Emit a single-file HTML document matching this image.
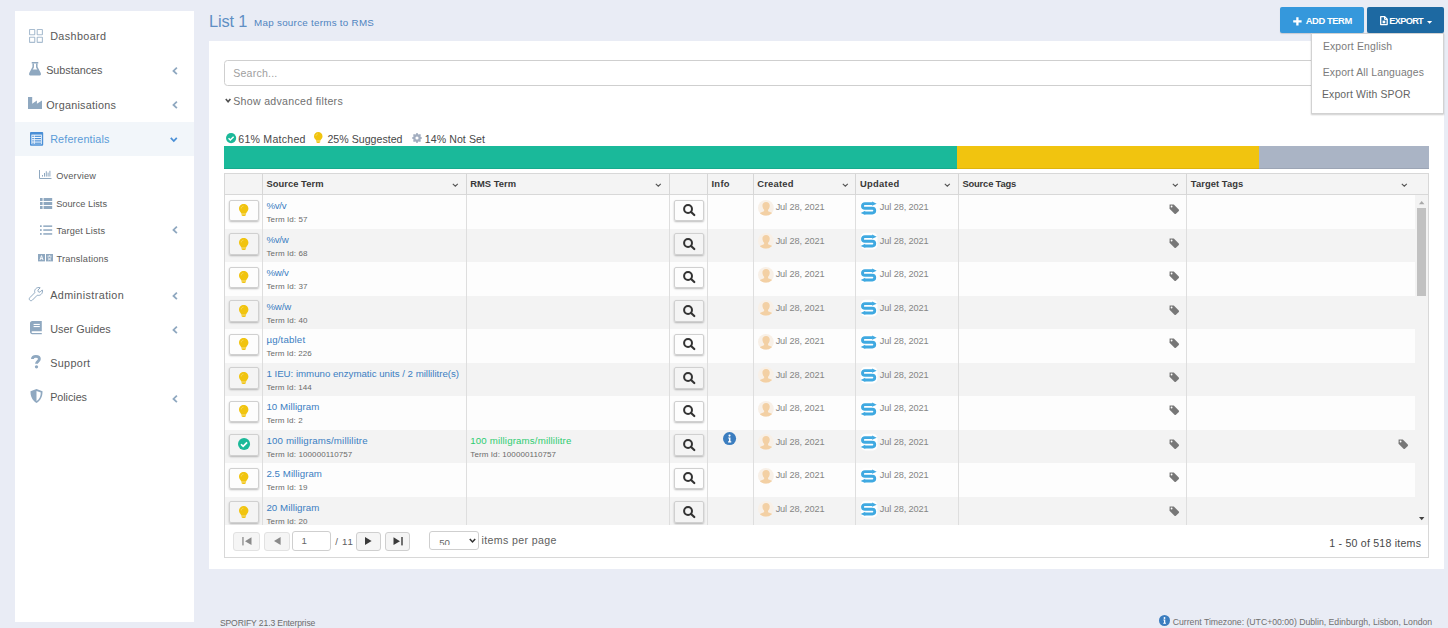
<!DOCTYPE html>
<html lang="en">
<head>
<meta charset="utf-8">
<title>List 1 - Map source terms to RMS</title>
<style>
*{box-sizing:border-box;margin:0;padding:0}
html,body{width:1448px;height:628px;overflow:hidden}
body{background:#e9ecf5;font-family:"Liberation Sans", sans-serif;position:relative}
.abs{position:absolute}
svg{display:block;overflow:visible}
.tx{position:absolute;white-space:nowrap}
#side{position:absolute;left:15.2px;top:11px;width:178.6px;height:611px;background:#fff}
#panel{position:absolute;left:209px;top:40.8px;width:1235px;height:528px;background:#fff}
#bar{position:absolute;left:224px;top:146.3px;width:1204.6px;height:22.8px;background:#aab4c5;overflow:hidden}
#bar .g{position:absolute;left:0;top:0;height:23px;width:733px;background:#1ab99a}
#bar .y{position:absolute;left:733px;top:0;height:23px;width:302.3px;background:#f1c40f}
#bar .sh{position:absolute;left:0;bottom:0;height:1px;width:100%;background:rgba(0,0,0,.08)}
#dd{position:absolute;left:1311.2px;top:33.2px;width:132.8px;height:80.6px;background:#fff;border:1px solid #d2d2d2;box-shadow:0 1px 1.5px rgba(0,0,0,.2)}
#grid{position:absolute;left:223.6px;top:173px;width:1205.4px;height:384.7px;border:1px solid #d8d8d8;background:#fff}
#ghead{position:absolute;left:224.6px;top:174px;width:1203.4px;height:20.8px;background:#f4f4f4;border-bottom:1px solid #d8d8d8}
#gbody{position:absolute;left:224.6px;top:194.8px;width:1190.4px;height:330.1px;overflow:hidden}
.row{position:absolute;left:0;width:1191px;background:#fdfdfd}
.row.alt{background:#f3f3f3}
.ib{position:absolute;width:30px;height:21.2px;border:1px solid #d0d0d0;border-radius:2px;background:rgba(255,255,255,.12);box-shadow:0 1px 2px rgba(0,0,0,.26)}
</style>
</head>
<body>
<div id="side"></div>
<div class="abs" style="left:15px;top:122.1px;width:179px;height:34px;background:#f2f6fa"></div>
<svg class="abs" style="left:29px;top:28.7px" width="14" height="14" viewBox="0 0 14 14" ><rect x="0.55" y="0.55" width="5.2" height="5.2" rx="0.4" fill="none" stroke="#a9bdd0" stroke-width="1.1"/><rect x="0.55" y="8.2" width="5.2" height="5.2" rx="0.4" fill="none" stroke="#a9bdd0" stroke-width="1.1"/><rect x="8.2" y="0.55" width="5.2" height="5.2" rx="0.4" fill="none" stroke="#a9bdd0" stroke-width="1.1"/><rect x="8.2" y="8.2" width="5.2" height="5.2" rx="0.4" fill="none" stroke="#a9bdd0" stroke-width="1.1"/></svg>
<span id="t0" class="tx" style="left:50.15px;top:29.13px;font-size:10.8px;line-height:14.0px;color:#585858;letter-spacing:0.391px;">Dashboard</span>
<svg class="abs" style="left:29.3px;top:62.3px" width="12" height="13.5" viewBox="0 0 12 13.5" ><rect x="2.700" y="0" width="6.600" height="1.500" rx="0.300" fill="#8fa8c0"/><path d="M4.200 1.400v3.800L0.900 11.300c-.4.700.100 1.500.900 1.500h8.400c.8 0 1.300-.8.900-1.500L7.800 5.200V1.400" fill="none" stroke="#8fa8c0" stroke-width="1.500" stroke-linejoin="round"/><path d="M3 7.400h6l2.400 4.300c.3.500-.100 1.100-.700 1.100H1.300c-.600 0-1-.600-.700-1.100z" fill="#8fa8c0"/></svg>
<span id="t1" class="tx" style="left:46.20px;top:63.43px;font-size:10.8px;line-height:14.0px;color:#585858;letter-spacing:-0.020px;">Substances</span>
<svg class="abs" style="left:171.7px;top:67.2px" width="5.8" height="7.8" viewBox="0 0 5.8 7.8" ><path d="M4.900 0.700L1.500 3.900l3.400 3.200" fill="none" stroke="#8fa8c0" stroke-width="1.800"/></svg>
<svg class="abs" style="left:28.2px;top:97.2px" width="14" height="12.1" viewBox="0 0 14 12.1" ><path d="M0 0h4.200v6.800l4.700-3.300v3.300l5.100-3.300v8.600H0z" fill="#8fa8c0"/></svg>
<span id="t2" class="tx" style="left:46.20px;top:97.63px;font-size:10.8px;line-height:14.0px;color:#585858;letter-spacing:0.248px;">Organisations</span>
<svg class="abs" style="left:171.7px;top:101.4px" width="5.8" height="7.8" viewBox="0 0 5.8 7.8" ><path d="M4.900 0.700L1.500 3.900l3.400 3.200" fill="none" stroke="#8fa8c0" stroke-width="1.800"/></svg>
<svg class="abs" style="left:29.9px;top:132px" width="13.2" height="13.7" viewBox="0 0 13.2 13.7" ><rect x="0.700" y="0.700" width="11.800" height="12.300" rx="0.300" fill="#f4f8fd" stroke="#4a8fd6" stroke-width="1.400"/><rect x="0.700" y="0.700" width="11.800" height="1.900" fill="#4a8fd6"/><rect x="2.300" y="3.7" width="1.500" height="1.200" fill="#4a8fd6"/><rect x="4.700" y="3.7" width="6.300" height="1.200" fill="#4a8fd6"/><rect x="2.300" y="6.0" width="1.500" height="1.200" fill="#4a8fd6"/><rect x="4.700" y="6.0" width="6.300" height="1.200" fill="#4a8fd6"/><rect x="2.300" y="8.3" width="1.500" height="1.200" fill="#4a8fd6"/><rect x="4.700" y="8.3" width="6.300" height="1.200" fill="#4a8fd6"/><rect x="2.300" y="10.6" width="1.500" height="1.200" fill="#4a8fd6"/><rect x="4.700" y="10.6" width="6.300" height="1.200" fill="#4a8fd6"/></svg>
<span id="t3" class="tx" style="left:50.15px;top:131.53px;font-size:10.8px;line-height:14.0px;color:#5a9bd8;letter-spacing:0.149px;">Referentials</span>
<svg class="abs" style="left:170.4px;top:137px" width="7.6" height="5.2" viewBox="0 0 7.6 5.2" ><path d="M0.800 0.900L3.8 4.1L6.8 0.900" fill="none" stroke="#4a8fd6" stroke-width="1.7"/></svg>
<svg class="abs" style="left:39.3px;top:170.2px" width="12.5" height="9.2" viewBox="0 0 12.5 9.2" ><path d="M0.500 0v8.500h12" fill="none" stroke="#8fa8c0" stroke-width="1"/><rect x="3.0" y="5.0" width="1" height="1.6" fill="#8fa8c0"/><rect x="5.0" y="2.9999999999999996" width="1" height="3.6" fill="#8fa8c0"/><rect x="6.8" y="1.1999999999999993" width="1" height="5.4" fill="#8fa8c0"/><rect x="8.6" y="2.5999999999999996" width="1" height="4.0" fill="#8fa8c0"/><rect x="10.4" y="0.7999999999999998" width="1" height="5.8" fill="#8fa8c0"/></svg>
<span id="t4" class="tx" style="left:56.15px;top:170.01px;font-size:9.2px;line-height:12.0px;color:#585858;letter-spacing:0.211px;">Overview</span>
<svg class="abs" style="left:39.6px;top:197.5px" width="12.2" height="11.2" viewBox="0 0 12.2 11.2" ><rect x="0" y="0" width="2.600" height="3" fill="#8fa8c0"/><rect x="3.600" y="0" width="8.600" height="3" fill="#8fa8c0"/><rect x="0" y="4" width="2.600" height="3" fill="#8fa8c0"/><rect x="3.600" y="4" width="8.600" height="3" fill="#8fa8c0"/><rect x="0" y="8" width="2.600" height="3" fill="#8fa8c0"/><rect x="3.600" y="8" width="8.600" height="3" fill="#8fa8c0"/></svg>
<span id="t5" class="tx" style="left:56.15px;top:198.11px;font-size:9.2px;line-height:12.0px;color:#585858;letter-spacing:0.027px;">Source Lists</span>
<svg class="abs" style="left:39.6px;top:225.2px" width="12.2" height="10" viewBox="0 0 12.2 10" ><rect x="0" y="0.3" width="1.700" height="1.700" fill="#8fa8c0"/><rect x="3.300" y="0.4" width="8.900" height="1.500" fill="#8fa8c0"/><rect x="0" y="4.2" width="1.700" height="1.700" fill="#8fa8c0"/><rect x="3.300" y="4.3" width="8.900" height="1.500" fill="#8fa8c0"/><rect x="0" y="8.1" width="1.700" height="1.700" fill="#8fa8c0"/><rect x="3.300" y="8.2" width="8.900" height="1.500" fill="#8fa8c0"/></svg>
<span id="t6" class="tx" style="left:56.45px;top:225.31px;font-size:9.2px;line-height:12.0px;color:#585858;letter-spacing:0.147px;">Target Lists</span>
<svg class="abs" style="left:172px;top:226.4px" width="5.8" height="7.8" viewBox="0 0 5.8 7.8" ><path d="M4.900 0.700L1.500 3.900l3.400 3.200" fill="none" stroke="#8fa8c0" stroke-width="1.800"/></svg>
<svg class="abs" style="left:38px;top:253.8px" width="15" height="7.4" viewBox="0 0 15 7.4" ><rect x="0" y="0" width="7" height="7.400" fill="#8fa8c0"/><rect x="8" y="0" width="7" height="7.400" fill="#8fa8c0"/><path d="M2 6l1.500-4.400 1.500 4.400M2.600 4.600h1.800" stroke="#fff" stroke-width="0.9" fill="none"/><path d="M9.500 2.200h4M11.500 1.200v1M10.200 3.400c.5 1.400 1.500 2.200 2.800 2.600M12.800 3.400c-.5 1.400-1.500 2.200-2.800 2.600" stroke="#fff" stroke-width="0.8" fill="none"/></svg>
<span id="t7" class="tx" style="left:56.45px;top:252.61px;font-size:9.2px;line-height:12.0px;color:#585858;letter-spacing:0.204px;">Translations</span>
<svg class="abs" style="left:29px;top:286.8px" width="14.4" height="14.4" viewBox="0 0 14.4 14.4" ><path d="M13.300 2.900l-2.300 2.300-1.700-.4-.4-1.700 2.300-2.300c-1.600-.6-3.400-.2-4.500 1-1 1.100-1.300 2.500-.9 3.900l-5 5c-.7.700-.7 1.800 0 2.500s1.800.7 2.500 0l5-5c1.400.4 2.800.1 3.900-.9 1.200-1.100 1.600-2.900 1.100-4.400z" fill="none" stroke="#8fa8c0" stroke-width="1" stroke-linejoin="round"/></svg>
<span id="t8" class="tx" style="left:50.15px;top:287.73px;font-size:10.8px;line-height:14.0px;color:#585858;letter-spacing:0.400px;">Administration</span>
<svg class="abs" style="left:171.7px;top:292px" width="5.8" height="7.8" viewBox="0 0 5.8 7.8" ><path d="M4.900 0.700L1.500 3.900l3.400 3.200" fill="none" stroke="#8fa8c0" stroke-width="1.800"/></svg>
<svg class="abs" style="left:30.2px;top:320.7px" width="11.9" height="13.3" viewBox="0 0 11.9 13.3" ><path d="M2.200 0h9.600v10.200h-9.400c-.5 0-.9.400-.9.900s.4.900.9.900h9.400v1.300H2.200C1 13.300 0 12.300 0 11.100V2.200C0 1 1 0 2.200 0z" fill="#8fa8c0"/><rect x="3.600" y="2.900" width="6.200" height="1.100" fill="#fff"/><rect x="3.600" y="5" width="6.200" height="1.100" fill="#fff"/></svg>
<span id="t9" class="tx" style="left:50.15px;top:322.03px;font-size:10.8px;line-height:14.0px;color:#585858;letter-spacing:0.058px;">User Guides</span>
<svg class="abs" style="left:171.7px;top:326.2px" width="5.8" height="7.8" viewBox="0 0 5.8 7.8" ><path d="M4.900 0.700L1.500 3.900l3.400 3.200" fill="none" stroke="#8fa8c0" stroke-width="1.800"/></svg>
<svg class="abs" style="left:31.2px;top:355.2px" width="10" height="13.5" viewBox="0 0 10 13.5" ><path d="M1.400 4C1.500 2.200 2.900 1.400 4.900 1.400c2.100 0 3.500.9 3.500 2.600 0 2.300-2.900 2.400-2.900 4.700" fill="none" stroke="#8fa8c0" stroke-width="2.800"/><circle cx="5.500" cy="11.800" r="1.650" fill="#8fa8c0"/></svg>
<span id="t10" class="tx" style="left:50.15px;top:356.13px;font-size:10.8px;line-height:14.0px;color:#585858;letter-spacing:0.357px;">Support</span>
<svg class="abs" style="left:29.7px;top:388.8px" width="13" height="14" viewBox="0 0 13 14" ><path d="M6.500 0l6 2.200c.1 5.200-1.700 9.200-6 11.800C2.200 11.400.400 7.400.500 2.200z" fill="#8fa8c0"/><path d="M6.500 1.900l4.300 1.600c0 3.700-1.300 6.600-4.300 8.700z" fill="#fff"/></svg>
<span id="t11" class="tx" style="left:50.15px;top:390.13px;font-size:10.8px;line-height:14.0px;color:#585858;letter-spacing:-0.051px;">Policies</span>
<svg class="abs" style="left:171.7px;top:394.6px" width="5.8" height="7.8" viewBox="0 0 5.8 7.8" ><path d="M4.900 0.700L1.500 3.900l3.400 3.200" fill="none" stroke="#8fa8c0" stroke-width="1.800"/></svg>
<span id="t12" class="tx" style="left:208.92px;top:11.45px;font-size:16.4px;line-height:21.3px;color:#5f8fc4;letter-spacing:-0.124px;">List 1</span>
<span id="t13" class="tx" style="left:254.11px;top:17.17px;font-size:9.8px;line-height:12.7px;color:#4f84c0;letter-spacing:0.273px;">Map source terms to RMS</span>
<div class="abs" style="left:1279.8px;top:7.4px;width:84.2px;height:25.5px;background:#3598dc;border-radius:2px;box-shadow:0 1px 1px rgba(0,0,0,.15)"></div>
<svg class="abs" style="left:1293.4px;top:16.5px" width="8.8" height="8.8" viewBox="0 0 8.8 8.8" ><path d="M4.400 0.200v8.400M0.200 4.400h8.400" stroke="#fff" stroke-width="2.300"/></svg>
<span id="t14" class="tx" style="left:1305.74px;top:14.61px;font-size:9.4px;line-height:12.2px;color:#fff;font-weight:bold;letter-spacing:-0.420px;">ADD TERM</span>
<div class="abs" style="left:1366.5px;top:7.4px;width:77.4px;height:25.5px;background:#1d69a2;border-radius:2px;box-shadow:0 1px 1px rgba(0,0,0,.15)"></div>
<svg class="abs" style="left:1380px;top:16px" width="7.9" height="9.3" viewBox="0 0 7.9 9.3" ><path d="M0.700 0.700h4l2.500 2.500v5.400H0.700z" fill="none" stroke="#fff" stroke-width="1.300" stroke-linejoin="round"/><path d="M4.500 0.700v2.700h2.700" fill="none" stroke="#fff" stroke-width="1"/><rect x="2.600" y="4.600" width="2.700" height="2.700" fill="#fff"/></svg>
<span id="t15" class="tx" style="left:1389.35px;top:14.71px;font-size:9.2px;line-height:12.0px;color:#fff;font-weight:bold;letter-spacing:-0.683px;">EXPORT</span>
<svg class="abs" style="left:1427.2px;top:21.2px" width="5.2" height="2.8" viewBox="0 0 5.2 2.8" ><path d="M0 0h5.2L2.6 2.8z" fill="#fff"/></svg>
<div id="panel"></div>
<div class="abs" style="left:224.2px;top:60px;width:1204.6px;height:25.5px;border:1px solid #cfcfcf;border-radius:3.5px;background:#fff"></div>
<span id="t16" class="tx" style="left:233.26px;top:66.63px;font-size:10.6px;line-height:13.8px;color:#a0a0a0;letter-spacing:0.196px;">Search...</span>
<svg class="abs" style="left:224.6px;top:98.2px" width="6.2" height="4.8" viewBox="0 0 6.2 4.8" ><path d="M0.800 0.900L3.1 3.6999999999999997L5.4 0.900" fill="none" stroke="#505050" stroke-width="1.6"/></svg>
<span id="t17" class="tx" style="left:233.26px;top:94.93px;font-size:10.6px;line-height:13.8px;color:#707070;letter-spacing:0.290px;">Show advanced filters</span>
<svg class="abs" style="left:225.9px;top:132.8px" width="10.2" height="10.2" viewBox="0 0 12 12" ><circle cx="6" cy="6" r="6" fill="#1cb999"/><path d="M3 6.200l2.100 2.100L9 4.300" fill="none" stroke="#fff" stroke-width="1.700"/></svg>
<span id="t18" class="tx" style="left:238.26px;top:132.83px;font-size:10.6px;line-height:13.8px;color:#484848;letter-spacing:0.239px;">61% Matched</span>
<svg class="abs" style="left:313.8px;top:132.4px" width="8.526" height="10.962" viewBox="0 0 9.8 12.6" ><path d="M4.900 0C2.200 0 0 2.100 0 4.800c0 1.500.700 2.600 1.500 3.500.600.700.900 1.200 1 1.900h4.800c.100-.700.400-1.200 1-1.900.800-.900 1.500-2 1.500-3.500C9.800 2.100 7.600 0 4.900 0z" fill="#f1c40f"/><path d="M2.600 10.600h4.600v1.100H2.600zM2.900 11.700h4c0 .5-.8.900-2 .900s-2-.4-2-.9z" fill="#f1c40f"/><path d="M2.300 4.600c0-1.300 1-2.300 2.300-2.400" fill="none" stroke="#f8de74" stroke-width="0.800"/></svg>
<span id="t19" class="tx" style="left:327.46px;top:132.83px;font-size:10.6px;line-height:13.8px;color:#484848;letter-spacing:0.017px;">25% Suggested</span>
<svg class="abs" style="left:412.2px;top:133px" width="10" height="10" viewBox="0 0 12 12" ><path d="M11.96 5.29L11.96 6.71L10.52 7.28L10.10 8.30L10.71 9.71L9.71 10.71L8.30 10.10L7.28 10.52L6.71 11.96L5.29 11.96L4.72 10.52L3.70 10.10L2.29 10.71L1.29 9.71L1.90 8.30L1.48 7.28L0.04 6.71L0.04 5.29L1.48 4.72L1.90 3.70L1.29 2.29L2.29 1.29L3.70 1.90L4.72 1.48L5.29 0.04L6.71 0.04L7.28 1.48L8.30 1.90L9.71 1.29L10.71 2.29L10.10 3.70L10.52 4.72z" fill="#a3aec0"/><circle cx="6" cy="6" r="1.900" fill="#fff"/></svg>
<span id="t20" class="tx" style="left:424.76px;top:132.83px;font-size:10.6px;line-height:13.8px;color:#484848;letter-spacing:0.071px;">14% Not Set</span>
<div id="bar"><div class="g"></div><div class="y"></div><div class="sh"></div></div>
<div id="grid"></div><div id="ghead"></div>
<div id="gbody">
<div class="row" style="top:0.00px;height:34.00px"></div>
<div class="row alt" style="top:34.00px;height:33.50px"></div>
<div class="row" style="top:67.50px;height:33.50px"></div>
<div class="row alt" style="top:101.00px;height:33.50px"></div>
<div class="row" style="top:134.50px;height:33.50px"></div>
<div class="row alt" style="top:168.00px;height:33.50px"></div>
<div class="row" style="top:201.50px;height:33.50px"></div>
<div class="row alt" style="top:235.00px;height:33.50px"></div>
<div class="row" style="top:268.50px;height:33.50px"></div>
<div class="row alt" style="top:302.00px;height:33.50px"></div>
</div>
<div class="abs" style="left:261.9px;top:174px;width:1px;height:21px;background:#d6d6d6"></div>
<div class="abs" style="left:261.9px;top:195.3px;width:1px;height:329.6px;background:#dedede"></div>
<div class="abs" style="left:465.9px;top:174px;width:1px;height:21px;background:#d6d6d6"></div>
<div class="abs" style="left:465.9px;top:195.3px;width:1px;height:329.6px;background:#dedede"></div>
<div class="abs" style="left:669.0px;top:174px;width:1px;height:21px;background:#d6d6d6"></div>
<div class="abs" style="left:669.0px;top:195.3px;width:1px;height:329.6px;background:#dedede"></div>
<div class="abs" style="left:707.0px;top:174px;width:1px;height:21px;background:#d6d6d6"></div>
<div class="abs" style="left:707.0px;top:195.3px;width:1px;height:329.6px;background:#dedede"></div>
<div class="abs" style="left:752.9px;top:174px;width:1px;height:21px;background:#d6d6d6"></div>
<div class="abs" style="left:752.9px;top:195.3px;width:1px;height:329.6px;background:#dedede"></div>
<div class="abs" style="left:855.4px;top:174px;width:1px;height:21px;background:#d6d6d6"></div>
<div class="abs" style="left:855.4px;top:195.3px;width:1px;height:329.6px;background:#dedede"></div>
<div class="abs" style="left:957.9px;top:174px;width:1px;height:21px;background:#d6d6d6"></div>
<div class="abs" style="left:957.9px;top:195.3px;width:1px;height:329.6px;background:#dedede"></div>
<div class="abs" style="left:1186.0px;top:174px;width:1px;height:21px;background:#d6d6d6"></div>
<div class="abs" style="left:1186.0px;top:195.3px;width:1px;height:329.6px;background:#dedede"></div>
<span id="t21" class="tx" style="left:266.44px;top:178.31px;font-size:9.4px;line-height:12.2px;color:#383838;font-weight:bold;letter-spacing:0.042px;">Source Term</span>
<svg class="abs" style="left:452px;top:183.1px" width="6.6" height="4.3" viewBox="0 0 6.6 4.3" ><path d="M0.800 0.900L3.3 3.1999999999999997L5.8 0.900" fill="none" stroke="#555" stroke-width="1.15"/></svg>
<span id="t22" class="tx" style="left:470.24px;top:178.31px;font-size:9.4px;line-height:12.2px;color:#383838;font-weight:bold;letter-spacing:0.016px;">RMS Term</span>
<svg class="abs" style="left:655.4px;top:183.1px" width="6.6" height="4.3" viewBox="0 0 6.6 4.3" ><path d="M0.800 0.900L3.3 3.1999999999999997L5.8 0.900" fill="none" stroke="#555" stroke-width="1.15"/></svg>
<span id="t23" class="tx" style="left:711.44px;top:178.31px;font-size:9.4px;line-height:12.2px;color:#383838;font-weight:bold;letter-spacing:0.323px;">Info</span>
<span id="t24" class="tx" style="left:757.24px;top:178.31px;font-size:9.4px;line-height:12.2px;color:#383838;font-weight:bold;letter-spacing:0.234px;">Created</span>
<svg class="abs" style="left:841.8px;top:183.1px" width="6.6" height="4.3" viewBox="0 0 6.6 4.3" ><path d="M0.800 0.900L3.3 3.1999999999999997L5.8 0.900" fill="none" stroke="#555" stroke-width="1.15"/></svg>
<span id="t25" class="tx" style="left:859.94px;top:178.31px;font-size:9.4px;line-height:12.2px;color:#383838;font-weight:bold;letter-spacing:0.310px;">Updated</span>
<svg class="abs" style="left:944.2px;top:183.1px" width="6.6" height="4.3" viewBox="0 0 6.6 4.3" ><path d="M0.800 0.900L3.3 3.1999999999999997L5.8 0.900" fill="none" stroke="#555" stroke-width="1.15"/></svg>
<span id="t26" class="tx" style="left:962.44px;top:178.31px;font-size:9.4px;line-height:12.2px;color:#383838;font-weight:bold;letter-spacing:-0.174px;">Source Tags</span>
<svg class="abs" style="left:1172.4px;top:183.1px" width="6.6" height="4.3" viewBox="0 0 6.6 4.3" ><path d="M0.800 0.900L3.3 3.1999999999999997L5.8 0.900" fill="none" stroke="#555" stroke-width="1.15"/></svg>
<span id="t27" class="tx" style="left:1190.84px;top:178.31px;font-size:9.4px;line-height:12.2px;color:#383838;font-weight:bold;letter-spacing:0.063px;">Target Tags</span>
<svg class="abs" style="left:1401px;top:183.1px" width="6.6" height="4.3" viewBox="0 0 6.6 4.3" ><path d="M0.800 0.900L3.3 3.1999999999999997L5.8 0.900" fill="none" stroke="#555" stroke-width="1.15"/></svg>
<div class="abs" style="left:224px;top:195.3px;width:1204px;height:329.6px;overflow:hidden">
<div class="ib" style="left:5.0px;top:4.60px"></div>
<svg class="abs" style="left:14.800000000000011px;top:8.999999999999995px" width="9.408" height="12.096" viewBox="0 0 9.8 12.6" ><path d="M4.900 0C2.200 0 0 2.100 0 4.800c0 1.500.700 2.600 1.500 3.500.600.700.900 1.200 1 1.900h4.800c.100-.700.400-1.200 1-1.900.800-.900 1.500-2 1.500-3.500C9.800 2.100 7.600 0 4.900 0z" fill="#f1c40f"/><path d="M2.600 10.600h4.600v1.100H2.600zM2.900 11.700h4c0 .5-.8.900-2 .900s-2-.4-2-.9z" fill="#f1c40f"/><path d="M2.300 4.600c0-1.300 1-2.300 2.300-2.400" fill="none" stroke="#f8de74" stroke-width="0.800"/></svg>
<span id="t28" class="tx" style="left:42.42px;top:4.82px;font-size:9.7px;line-height:12.6px;color:#3b7ec2;letter-spacing:-0.262px;">%v/v</span>
<span id="t29" class="tx" style="left:42.52px;top:19.30px;font-size:8.0px;line-height:10.4px;color:#6a6a6a;letter-spacing:0.088px;">Term Id: 57</span>
<div class="ib" style="left:450.0px;top:4.60px;width:30px;height:21.2px"></div>
<svg class="abs" style="left:459.1px;top:8.899999999999995px" width="12.4" height="12.2" viewBox="0 0 12.4 12.2" ><circle cx="5.050" cy="5" r="3.950" fill="none" stroke="#333" stroke-width="2"/><path d="M8.100 8l3.200 3" stroke="#333" stroke-width="2.200" stroke-linecap="round"/></svg>
<svg class="abs" style="left:534.0px;top:4.60px" width="15.8" height="15.8" viewBox="0 0 16 16"><defs><clipPath id="c0"><circle cx="8" cy="8" r="8"/></clipPath></defs><circle cx="8" cy="8" r="8" fill="#f8f0e7"/><g clip-path="url(#c0)"><path d="M8.200 1.900c2.200 0 3.700 1.500 3.700 3.700 0 1.800-.7 3.400-1.700 4.300v1.400c1.600.6 3.700 1.100 4.600 2.200V16H1.600v-2.500c.9-1.100 3-1.600 4.600-2.200V9.900c-1-.9-1.700-2.500-1.700-4.300 0-2.200 1.500-3.700 3.700-3.700z" fill="#f3d0a4"/></g></svg>
<span id="t30" class="tx" style="left:551.65px;top:5.91px;font-size:9.2px;line-height:12.0px;color:#858585;letter-spacing:-0.110px;">Jul 28, 2021</span>
<svg class="abs" style="left:636.6px;top:4.2999999999999945px" width="16.2" height="16.2" viewBox="0 0 16.2 16.2" ><rect x="-0.200" y="-0.200" width="16.600" height="16.600" rx="4.500" fill="#fff"/><g transform="translate(-0.300 1.200)"><path d="M11.500 2.450H4.100a2.300 2.300 0 0 0 0 4.600h7.600a2.350 2.350 0 0 1 0 4.700H4.200" fill="none" stroke="#3fa9e1" stroke-width="2.900"/><path d="M11.400 0.300l4.600 2.150-4.600 2.200z" fill="#3fa9e1"/><path d="M4.500 9.500L0 11.750l4.500 2.100z" fill="#3fa9e1"/></g></svg>
<span id="t31" class="tx" style="left:655.85px;top:5.91px;font-size:9.2px;line-height:12.0px;color:#858585;letter-spacing:-0.110px;">Jul 28, 2021</span>
<svg class="abs" style="left:945px;top:9.199999999999994px" width="10.4" height="10.4" viewBox="0 0 10.4 10.4" ><path d="M0.600 0.500h4.200l5 5c.4.400.4 1 0 1.400L6.900 9.800c-.4.400-1 .4-1.400 0l-5-5z" fill="#777"/><circle cx="2.600" cy="2.500" r="0.900" fill="#fff"/></svg>
<div class="ib" style="left:5.0px;top:38.10px"></div>
<svg class="abs" style="left:14.800000000000011px;top:42.49999999999999px" width="9.408" height="12.096" viewBox="0 0 9.8 12.6" ><path d="M4.900 0C2.200 0 0 2.100 0 4.800c0 1.500.700 2.600 1.500 3.500.600.700.900 1.200 1 1.900h4.800c.100-.700.400-1.200 1-1.900.800-.900 1.500-2 1.500-3.500C9.800 2.100 7.600 0 4.900 0z" fill="#f1c40f"/><path d="M2.600 10.600h4.600v1.100H2.600zM2.900 11.700h4c0 .5-.8.900-2 .900s-2-.4-2-.9z" fill="#f1c40f"/><path d="M2.300 4.600c0-1.300 1-2.300 2.300-2.400" fill="none" stroke="#f8de74" stroke-width="0.800"/></svg>
<span id="t32" class="tx" style="left:42.42px;top:38.32px;font-size:9.7px;line-height:12.6px;color:#3b7ec2;letter-spacing:-0.270px;">%v/w</span>
<span id="t33" class="tx" style="left:42.52px;top:53.80px;font-size:8.0px;line-height:10.4px;color:#6a6a6a;letter-spacing:0.088px;">Term Id: 68</span>
<div class="ib" style="left:450.0px;top:38.10px;width:30px;height:21.2px"></div>
<svg class="abs" style="left:459.1px;top:42.39999999999999px" width="12.4" height="12.2" viewBox="0 0 12.4 12.2" ><circle cx="5.050" cy="5" r="3.950" fill="none" stroke="#333" stroke-width="2"/><path d="M8.100 8l3.200 3" stroke="#333" stroke-width="2.200" stroke-linecap="round"/></svg>
<svg class="abs" style="left:534.0px;top:38.10px" width="15.8" height="15.8" viewBox="0 0 16 16"><defs><clipPath id="c1"><circle cx="8" cy="8" r="8"/></clipPath></defs><circle cx="8" cy="8" r="8" fill="#f8f0e7"/><g clip-path="url(#c1)"><path d="M8.200 1.900c2.200 0 3.700 1.500 3.700 3.700 0 1.800-.7 3.400-1.700 4.300v1.400c1.600.6 3.700 1.100 4.600 2.200V16H1.600v-2.500c.9-1.100 3-1.600 4.600-2.200V9.900c-1-.9-1.700-2.500-1.700-4.300 0-2.200 1.500-3.700 3.700-3.700z" fill="#f3d0a4"/></g></svg>
<span id="t34" class="tx" style="left:551.65px;top:39.41px;font-size:9.2px;line-height:12.0px;color:#858585;letter-spacing:-0.110px;">Jul 28, 2021</span>
<svg class="abs" style="left:636.6px;top:37.8px" width="16.2" height="16.2" viewBox="0 0 16.2 16.2" ><rect x="-0.200" y="-0.200" width="16.600" height="16.600" rx="4.500" fill="#fff"/><g transform="translate(-0.300 1.200)"><path d="M11.500 2.450H4.100a2.300 2.300 0 0 0 0 4.600h7.600a2.350 2.350 0 0 1 0 4.700H4.200" fill="none" stroke="#3fa9e1" stroke-width="2.900"/><path d="M11.400 0.300l4.600 2.150-4.600 2.200z" fill="#3fa9e1"/><path d="M4.500 9.500L0 11.750l4.500 2.100z" fill="#3fa9e1"/></g></svg>
<span id="t35" class="tx" style="left:655.85px;top:39.41px;font-size:9.2px;line-height:12.0px;color:#858585;letter-spacing:-0.110px;">Jul 28, 2021</span>
<svg class="abs" style="left:945px;top:42.699999999999996px" width="10.4" height="10.4" viewBox="0 0 10.4 10.4" ><path d="M0.600 0.500h4.200l5 5c.4.400.4 1 0 1.400L6.900 9.800c-.4.400-1 .4-1.400 0l-5-5z" fill="#777"/><circle cx="2.600" cy="2.500" r="0.900" fill="#fff"/></svg>
<div class="ib" style="left:5.0px;top:71.60px"></div>
<svg class="abs" style="left:14.800000000000011px;top:75.99999999999997px" width="9.408" height="12.096" viewBox="0 0 9.8 12.6" ><path d="M4.900 0C2.200 0 0 2.100 0 4.800c0 1.500.700 2.600 1.500 3.500.600.700.900 1.200 1 1.900h4.800c.100-.700.400-1.200 1-1.900.800-.900 1.500-2 1.500-3.500C9.800 2.100 7.600 0 4.900 0z" fill="#f1c40f"/><path d="M2.600 10.600h4.600v1.100H2.600zM2.900 11.700h4c0 .5-.8.900-2 .900s-2-.4-2-.9z" fill="#f1c40f"/><path d="M2.300 4.600c0-1.300 1-2.300 2.300-2.400" fill="none" stroke="#f8de74" stroke-width="0.800"/></svg>
<span id="t36" class="tx" style="left:42.42px;top:71.82px;font-size:9.7px;line-height:12.6px;color:#3b7ec2;letter-spacing:-0.270px;">%w/v</span>
<span id="t37" class="tx" style="left:42.52px;top:86.30px;font-size:8.0px;line-height:10.4px;color:#6a6a6a;letter-spacing:0.088px;">Term Id: 37</span>
<div class="ib" style="left:450.0px;top:71.60px;width:30px;height:21.2px"></div>
<svg class="abs" style="left:459.1px;top:75.89999999999996px" width="12.4" height="12.2" viewBox="0 0 12.4 12.2" ><circle cx="5.050" cy="5" r="3.950" fill="none" stroke="#333" stroke-width="2"/><path d="M8.100 8l3.200 3" stroke="#333" stroke-width="2.200" stroke-linecap="round"/></svg>
<svg class="abs" style="left:534.0px;top:71.60px" width="15.8" height="15.8" viewBox="0 0 16 16"><defs><clipPath id="c2"><circle cx="8" cy="8" r="8"/></clipPath></defs><circle cx="8" cy="8" r="8" fill="#f8f0e7"/><g clip-path="url(#c2)"><path d="M8.200 1.900c2.200 0 3.700 1.500 3.700 3.700 0 1.800-.7 3.400-1.700 4.300v1.400c1.600.6 3.700 1.100 4.600 2.200V16H1.600v-2.500c.9-1.100 3-1.600 4.600-2.200V9.900c-1-.9-1.700-2.500-1.700-4.300 0-2.200 1.500-3.700 3.700-3.700z" fill="#f3d0a4"/></g></svg>
<span id="t38" class="tx" style="left:551.65px;top:72.91px;font-size:9.2px;line-height:12.0px;color:#858585;letter-spacing:-0.110px;">Jul 28, 2021</span>
<svg class="abs" style="left:636.6px;top:71.29999999999997px" width="16.2" height="16.2" viewBox="0 0 16.2 16.2" ><rect x="-0.200" y="-0.200" width="16.600" height="16.600" rx="4.500" fill="#fff"/><g transform="translate(-0.300 1.200)"><path d="M11.500 2.450H4.100a2.300 2.300 0 0 0 0 4.600h7.600a2.350 2.350 0 0 1 0 4.700H4.200" fill="none" stroke="#3fa9e1" stroke-width="2.900"/><path d="M11.400 0.300l4.600 2.150-4.600 2.200z" fill="#3fa9e1"/><path d="M4.500 9.500L0 11.750l4.500 2.100z" fill="#3fa9e1"/></g></svg>
<span id="t39" class="tx" style="left:655.85px;top:72.91px;font-size:9.2px;line-height:12.0px;color:#858585;letter-spacing:-0.110px;">Jul 28, 2021</span>
<svg class="abs" style="left:945px;top:76.19999999999996px" width="10.4" height="10.4" viewBox="0 0 10.4 10.4" ><path d="M0.600 0.500h4.200l5 5c.4.400.4 1 0 1.400L6.900 9.800c-.4.400-1 .4-1.400 0l-5-5z" fill="#777"/><circle cx="2.600" cy="2.500" r="0.900" fill="#fff"/></svg>
<div class="ib" style="left:5.0px;top:105.10px"></div>
<svg class="abs" style="left:14.800000000000011px;top:109.49999999999997px" width="9.408" height="12.096" viewBox="0 0 9.8 12.6" ><path d="M4.900 0C2.200 0 0 2.100 0 4.800c0 1.500.700 2.600 1.500 3.500.600.700.900 1.200 1 1.900h4.800c.100-.700.400-1.200 1-1.900.800-.900 1.500-2 1.500-3.500C9.800 2.100 7.600 0 4.900 0z" fill="#f1c40f"/><path d="M2.600 10.600h4.600v1.100H2.600zM2.900 11.700h4c0 .5-.8.900-2 .900s-2-.4-2-.9z" fill="#f1c40f"/><path d="M2.300 4.600c0-1.300 1-2.300 2.300-2.400" fill="none" stroke="#f8de74" stroke-width="0.800"/></svg>
<span id="t40" class="tx" style="left:42.42px;top:105.32px;font-size:9.7px;line-height:12.6px;color:#3b7ec2;letter-spacing:-0.178px;">%w/w</span>
<span id="t41" class="tx" style="left:42.52px;top:120.80px;font-size:8.0px;line-height:10.4px;color:#6a6a6a;letter-spacing:0.088px;">Term Id: 40</span>
<div class="ib" style="left:450.0px;top:105.10px;width:30px;height:21.2px"></div>
<svg class="abs" style="left:459.1px;top:109.39999999999996px" width="12.4" height="12.2" viewBox="0 0 12.4 12.2" ><circle cx="5.050" cy="5" r="3.950" fill="none" stroke="#333" stroke-width="2"/><path d="M8.100 8l3.200 3" stroke="#333" stroke-width="2.200" stroke-linecap="round"/></svg>
<svg class="abs" style="left:534.0px;top:105.10px" width="15.8" height="15.8" viewBox="0 0 16 16"><defs><clipPath id="c3"><circle cx="8" cy="8" r="8"/></clipPath></defs><circle cx="8" cy="8" r="8" fill="#f8f0e7"/><g clip-path="url(#c3)"><path d="M8.200 1.900c2.200 0 3.700 1.500 3.700 3.700 0 1.800-.7 3.400-1.700 4.300v1.400c1.600.6 3.700 1.100 4.600 2.200V16H1.600v-2.500c.9-1.100 3-1.600 4.600-2.200V9.900c-1-.9-1.700-2.500-1.700-4.300 0-2.200 1.500-3.700 3.700-3.700z" fill="#f3d0a4"/></g></svg>
<span id="t42" class="tx" style="left:551.65px;top:106.41px;font-size:9.2px;line-height:12.0px;color:#858585;letter-spacing:-0.110px;">Jul 28, 2021</span>
<svg class="abs" style="left:636.6px;top:104.79999999999997px" width="16.2" height="16.2" viewBox="0 0 16.2 16.2" ><rect x="-0.200" y="-0.200" width="16.600" height="16.600" rx="4.500" fill="#fff"/><g transform="translate(-0.300 1.200)"><path d="M11.500 2.450H4.100a2.300 2.300 0 0 0 0 4.600h7.600a2.350 2.350 0 0 1 0 4.700H4.200" fill="none" stroke="#3fa9e1" stroke-width="2.900"/><path d="M11.400 0.300l4.600 2.150-4.600 2.200z" fill="#3fa9e1"/><path d="M4.500 9.500L0 11.750l4.500 2.100z" fill="#3fa9e1"/></g></svg>
<span id="t43" class="tx" style="left:655.85px;top:106.41px;font-size:9.2px;line-height:12.0px;color:#858585;letter-spacing:-0.110px;">Jul 28, 2021</span>
<svg class="abs" style="left:945px;top:109.69999999999996px" width="10.4" height="10.4" viewBox="0 0 10.4 10.4" ><path d="M0.600 0.500h4.200l5 5c.4.400.4 1 0 1.400L6.900 9.800c-.4.400-1 .4-1.400 0l-5-5z" fill="#777"/><circle cx="2.600" cy="2.500" r="0.900" fill="#fff"/></svg>
<div class="ib" style="left:5.0px;top:138.60px"></div>
<svg class="abs" style="left:14.800000000000011px;top:142.99999999999997px" width="9.408" height="12.096" viewBox="0 0 9.8 12.6" ><path d="M4.900 0C2.200 0 0 2.100 0 4.800c0 1.500.700 2.600 1.500 3.500.600.700.900 1.200 1 1.900h4.800c.100-.700.400-1.200 1-1.900.800-.900 1.500-2 1.500-3.500C9.800 2.100 7.600 0 4.900 0z" fill="#f1c40f"/><path d="M2.600 10.600h4.600v1.100H2.600zM2.900 11.700h4c0 .5-.8.900-2 .900s-2-.4-2-.9z" fill="#f1c40f"/><path d="M2.300 4.600c0-1.300 1-2.300 2.300-2.400" fill="none" stroke="#f8de74" stroke-width="0.800"/></svg>
<span id="t44" class="tx" style="left:42.42px;top:138.82px;font-size:9.7px;line-height:12.6px;color:#3b7ec2;letter-spacing:0.163px;">µg/tablet</span>
<span id="t45" class="tx" style="left:42.52px;top:153.30px;font-size:8.0px;line-height:10.4px;color:#6a6a6a;letter-spacing:0.063px;">Term Id: 226</span>
<div class="ib" style="left:450.0px;top:138.60px;width:30px;height:21.2px"></div>
<svg class="abs" style="left:459.1px;top:142.89999999999998px" width="12.4" height="12.2" viewBox="0 0 12.4 12.2" ><circle cx="5.050" cy="5" r="3.950" fill="none" stroke="#333" stroke-width="2"/><path d="M8.100 8l3.200 3" stroke="#333" stroke-width="2.200" stroke-linecap="round"/></svg>
<svg class="abs" style="left:534.0px;top:138.60px" width="15.8" height="15.8" viewBox="0 0 16 16"><defs><clipPath id="c4"><circle cx="8" cy="8" r="8"/></clipPath></defs><circle cx="8" cy="8" r="8" fill="#f8f0e7"/><g clip-path="url(#c4)"><path d="M8.200 1.900c2.200 0 3.700 1.500 3.700 3.700 0 1.800-.7 3.400-1.700 4.300v1.400c1.600.6 3.700 1.100 4.600 2.200V16H1.600v-2.500c.9-1.100 3-1.600 4.600-2.200V9.900c-1-.9-1.700-2.500-1.700-4.300 0-2.200 1.500-3.700 3.700-3.700z" fill="#f3d0a4"/></g></svg>
<span id="t46" class="tx" style="left:551.65px;top:139.91px;font-size:9.2px;line-height:12.0px;color:#858585;letter-spacing:-0.110px;">Jul 28, 2021</span>
<svg class="abs" style="left:636.6px;top:138.29999999999995px" width="16.2" height="16.2" viewBox="0 0 16.2 16.2" ><rect x="-0.200" y="-0.200" width="16.600" height="16.600" rx="4.500" fill="#fff"/><g transform="translate(-0.300 1.200)"><path d="M11.500 2.450H4.100a2.300 2.300 0 0 0 0 4.600h7.600a2.350 2.350 0 0 1 0 4.700H4.200" fill="none" stroke="#3fa9e1" stroke-width="2.900"/><path d="M11.400 0.300l4.600 2.150-4.600 2.200z" fill="#3fa9e1"/><path d="M4.500 9.500L0 11.750l4.500 2.100z" fill="#3fa9e1"/></g></svg>
<span id="t47" class="tx" style="left:655.85px;top:139.91px;font-size:9.2px;line-height:12.0px;color:#858585;letter-spacing:-0.110px;">Jul 28, 2021</span>
<svg class="abs" style="left:945px;top:143.19999999999996px" width="10.4" height="10.4" viewBox="0 0 10.4 10.4" ><path d="M0.600 0.500h4.200l5 5c.4.400.4 1 0 1.400L6.900 9.800c-.4.400-1 .4-1.400 0l-5-5z" fill="#777"/><circle cx="2.600" cy="2.500" r="0.900" fill="#fff"/></svg>
<div class="ib" style="left:5.0px;top:172.10px"></div>
<svg class="abs" style="left:14.800000000000011px;top:176.49999999999997px" width="9.408" height="12.096" viewBox="0 0 9.8 12.6" ><path d="M4.900 0C2.200 0 0 2.100 0 4.800c0 1.500.700 2.600 1.500 3.500.600.700.900 1.200 1 1.900h4.800c.100-.700.400-1.200 1-1.900.800-.900 1.500-2 1.500-3.500C9.800 2.100 7.600 0 4.900 0z" fill="#f1c40f"/><path d="M2.600 10.600h4.600v1.100H2.600zM2.900 11.700h4c0 .5-.8.900-2 .900s-2-.4-2-.9z" fill="#f1c40f"/><path d="M2.300 4.600c0-1.300 1-2.300 2.300-2.400" fill="none" stroke="#f8de74" stroke-width="0.800"/></svg>
<span id="t48" class="tx" style="left:42.42px;top:172.32px;font-size:9.7px;line-height:12.6px;color:#3b7ec2;letter-spacing:-0.013px;">1 IEU: immuno enzymatic units / 2 millilitre(s)</span>
<span id="t49" class="tx" style="left:42.52px;top:187.80px;font-size:8.0px;line-height:10.4px;color:#6a6a6a;letter-spacing:0.063px;">Term Id: 144</span>
<div class="ib" style="left:450.0px;top:172.10px;width:30px;height:21.2px"></div>
<svg class="abs" style="left:459.1px;top:176.39999999999998px" width="12.4" height="12.2" viewBox="0 0 12.4 12.2" ><circle cx="5.050" cy="5" r="3.950" fill="none" stroke="#333" stroke-width="2"/><path d="M8.100 8l3.200 3" stroke="#333" stroke-width="2.200" stroke-linecap="round"/></svg>
<svg class="abs" style="left:534.0px;top:172.10px" width="15.8" height="15.8" viewBox="0 0 16 16"><defs><clipPath id="c5"><circle cx="8" cy="8" r="8"/></clipPath></defs><circle cx="8" cy="8" r="8" fill="#f8f0e7"/><g clip-path="url(#c5)"><path d="M8.200 1.900c2.200 0 3.700 1.500 3.700 3.700 0 1.800-.7 3.400-1.700 4.300v1.400c1.600.6 3.700 1.100 4.600 2.200V16H1.600v-2.500c.9-1.100 3-1.600 4.600-2.200V9.900c-1-.9-1.700-2.500-1.700-4.300 0-2.200 1.500-3.700 3.700-3.700z" fill="#f3d0a4"/></g></svg>
<span id="t50" class="tx" style="left:551.65px;top:173.41px;font-size:9.2px;line-height:12.0px;color:#858585;letter-spacing:-0.110px;">Jul 28, 2021</span>
<svg class="abs" style="left:636.6px;top:171.79999999999995px" width="16.2" height="16.2" viewBox="0 0 16.2 16.2" ><rect x="-0.200" y="-0.200" width="16.600" height="16.600" rx="4.500" fill="#fff"/><g transform="translate(-0.300 1.200)"><path d="M11.500 2.450H4.100a2.300 2.300 0 0 0 0 4.600h7.600a2.350 2.350 0 0 1 0 4.700H4.200" fill="none" stroke="#3fa9e1" stroke-width="2.900"/><path d="M11.400 0.300l4.600 2.150-4.600 2.200z" fill="#3fa9e1"/><path d="M4.500 9.500L0 11.750l4.500 2.100z" fill="#3fa9e1"/></g></svg>
<span id="t51" class="tx" style="left:655.85px;top:173.41px;font-size:9.2px;line-height:12.0px;color:#858585;letter-spacing:-0.110px;">Jul 28, 2021</span>
<svg class="abs" style="left:945px;top:176.69999999999996px" width="10.4" height="10.4" viewBox="0 0 10.4 10.4" ><path d="M0.600 0.500h4.200l5 5c.4.400.4 1 0 1.400L6.900 9.800c-.4.400-1 .4-1.400 0l-5-5z" fill="#777"/><circle cx="2.600" cy="2.500" r="0.900" fill="#fff"/></svg>
<div class="ib" style="left:5.0px;top:205.60px"></div>
<svg class="abs" style="left:14.800000000000011px;top:209.99999999999997px" width="9.408" height="12.096" viewBox="0 0 9.8 12.6" ><path d="M4.900 0C2.200 0 0 2.100 0 4.800c0 1.500.700 2.600 1.500 3.500.600.700.900 1.200 1 1.900h4.800c.100-.700.400-1.200 1-1.900.800-.900 1.500-2 1.500-3.500C9.800 2.100 7.600 0 4.900 0z" fill="#f1c40f"/><path d="M2.600 10.600h4.600v1.100H2.600zM2.900 11.700h4c0 .5-.8.900-2 .900s-2-.4-2-.9z" fill="#f1c40f"/><path d="M2.300 4.600c0-1.300 1-2.300 2.300-2.400" fill="none" stroke="#f8de74" stroke-width="0.800"/></svg>
<span id="t52" class="tx" style="left:42.42px;top:205.82px;font-size:9.7px;line-height:12.6px;color:#3b7ec2;letter-spacing:0.070px;">10 Milligram</span>
<span id="t53" class="tx" style="left:42.52px;top:220.30px;font-size:8.0px;line-height:10.4px;color:#6a6a6a;letter-spacing:0.062px;">Term Id: 2</span>
<div class="ib" style="left:450.0px;top:205.60px;width:30px;height:21.2px"></div>
<svg class="abs" style="left:459.1px;top:209.89999999999998px" width="12.4" height="12.2" viewBox="0 0 12.4 12.2" ><circle cx="5.050" cy="5" r="3.950" fill="none" stroke="#333" stroke-width="2"/><path d="M8.100 8l3.200 3" stroke="#333" stroke-width="2.200" stroke-linecap="round"/></svg>
<svg class="abs" style="left:534.0px;top:205.60px" width="15.8" height="15.8" viewBox="0 0 16 16"><defs><clipPath id="c6"><circle cx="8" cy="8" r="8"/></clipPath></defs><circle cx="8" cy="8" r="8" fill="#f8f0e7"/><g clip-path="url(#c6)"><path d="M8.200 1.900c2.200 0 3.700 1.500 3.700 3.700 0 1.800-.7 3.400-1.700 4.300v1.400c1.600.6 3.700 1.100 4.600 2.200V16H1.600v-2.500c.9-1.100 3-1.600 4.600-2.200V9.900c-1-.9-1.700-2.500-1.700-4.300 0-2.200 1.500-3.700 3.700-3.700z" fill="#f3d0a4"/></g></svg>
<span id="t54" class="tx" style="left:551.65px;top:206.91px;font-size:9.2px;line-height:12.0px;color:#858585;letter-spacing:-0.110px;">Jul 28, 2021</span>
<svg class="abs" style="left:636.6px;top:205.29999999999995px" width="16.2" height="16.2" viewBox="0 0 16.2 16.2" ><rect x="-0.200" y="-0.200" width="16.600" height="16.600" rx="4.500" fill="#fff"/><g transform="translate(-0.300 1.200)"><path d="M11.500 2.450H4.100a2.300 2.300 0 0 0 0 4.600h7.600a2.350 2.350 0 0 1 0 4.700H4.200" fill="none" stroke="#3fa9e1" stroke-width="2.900"/><path d="M11.400 0.300l4.600 2.150-4.600 2.200z" fill="#3fa9e1"/><path d="M4.500 9.500L0 11.750l4.500 2.100z" fill="#3fa9e1"/></g></svg>
<span id="t55" class="tx" style="left:655.85px;top:206.91px;font-size:9.2px;line-height:12.0px;color:#858585;letter-spacing:-0.110px;">Jul 28, 2021</span>
<svg class="abs" style="left:945px;top:210.19999999999996px" width="10.4" height="10.4" viewBox="0 0 10.4 10.4" ><path d="M0.600 0.500h4.200l5 5c.4.400.4 1 0 1.400L6.900 9.800c-.4.400-1 .4-1.400 0l-5-5z" fill="#777"/><circle cx="2.600" cy="2.500" r="0.900" fill="#fff"/></svg>
<div class="ib" style="left:5.0px;top:239.10px"></div>
<svg class="abs" style="left:14px;top:242.89999999999998px" width="12.1" height="12.1" viewBox="0 0 12 12" ><circle cx="6" cy="6" r="6" fill="#1cb999"/><path d="M3 6.200l2.100 2.100L9 4.300" fill="none" stroke="#fff" stroke-width="1.700"/></svg>
<span id="t56" class="tx" style="left:42.42px;top:239.32px;font-size:9.7px;line-height:12.6px;color:#3b7ec2;letter-spacing:0.155px;">100 milligrams/millilitre</span>
<span id="t57" class="tx" style="left:42.52px;top:254.80px;font-size:8.0px;line-height:10.4px;color:#6a6a6a;letter-spacing:0.092px;">Term Id: 100000110757</span>
<span id="t58" class="tx" style="left:246.22px;top:239.32px;font-size:9.7px;line-height:12.6px;color:#2ecc71;letter-spacing:0.155px;">100 milligrams/millilitre</span>
<span id="t59" class="tx" style="left:246.32px;top:254.80px;font-size:8.0px;line-height:10.4px;color:#6a6a6a;letter-spacing:0.092px;">Term Id: 100000110757</span>
<svg class="abs" style="left:499.1px;top:236.49999999999997px" width="13.1" height="13.1" viewBox="0 0 13 13" ><circle cx="6.500" cy="6.500" r="6.500" fill="#3b7dbf"/><circle cx="6.500" cy="3.500" r="1.100" fill="#fff"/><path d="M5.200 5.400h2.200v3.900h.8v1.100H5v-1.100h.9V6.500h-.7z" fill="#fff"/></svg>
<svg class="abs" style="left:1173.5px;top:243.69999999999996px" width="10.4" height="10.4" viewBox="0 0 10.4 10.4" ><path d="M0.600 0.500h4.200l5 5c.4.400.4 1 0 1.400L6.900 9.800c-.4.400-1 .4-1.400 0l-5-5z" fill="#777"/><circle cx="2.600" cy="2.500" r="0.900" fill="#fff"/></svg>
<div class="ib" style="left:450.0px;top:239.10px;width:30px;height:21.2px"></div>
<svg class="abs" style="left:459.1px;top:243.39999999999998px" width="12.4" height="12.2" viewBox="0 0 12.4 12.2" ><circle cx="5.050" cy="5" r="3.950" fill="none" stroke="#333" stroke-width="2"/><path d="M8.100 8l3.200 3" stroke="#333" stroke-width="2.200" stroke-linecap="round"/></svg>
<svg class="abs" style="left:534.0px;top:239.10px" width="15.8" height="15.8" viewBox="0 0 16 16"><defs><clipPath id="c7"><circle cx="8" cy="8" r="8"/></clipPath></defs><circle cx="8" cy="8" r="8" fill="#f8f0e7"/><g clip-path="url(#c7)"><path d="M8.200 1.900c2.200 0 3.700 1.500 3.700 3.700 0 1.800-.7 3.400-1.700 4.300v1.400c1.600.6 3.700 1.100 4.600 2.200V16H1.600v-2.500c.9-1.100 3-1.600 4.600-2.200V9.900c-1-.9-1.700-2.500-1.700-4.300 0-2.200 1.500-3.700 3.700-3.700z" fill="#f3d0a4"/></g></svg>
<span id="t60" class="tx" style="left:551.65px;top:240.41px;font-size:9.2px;line-height:12.0px;color:#858585;letter-spacing:-0.110px;">Jul 28, 2021</span>
<svg class="abs" style="left:636.6px;top:238.79999999999995px" width="16.2" height="16.2" viewBox="0 0 16.2 16.2" ><rect x="-0.200" y="-0.200" width="16.600" height="16.600" rx="4.500" fill="#fff"/><g transform="translate(-0.300 1.200)"><path d="M11.500 2.450H4.100a2.300 2.300 0 0 0 0 4.600h7.600a2.350 2.350 0 0 1 0 4.700H4.200" fill="none" stroke="#3fa9e1" stroke-width="2.900"/><path d="M11.400 0.300l4.600 2.150-4.600 2.200z" fill="#3fa9e1"/><path d="M4.500 9.500L0 11.750l4.500 2.100z" fill="#3fa9e1"/></g></svg>
<span id="t61" class="tx" style="left:655.85px;top:240.41px;font-size:9.2px;line-height:12.0px;color:#858585;letter-spacing:-0.110px;">Jul 28, 2021</span>
<svg class="abs" style="left:945px;top:243.69999999999996px" width="10.4" height="10.4" viewBox="0 0 10.4 10.4" ><path d="M0.600 0.500h4.200l5 5c.4.400.4 1 0 1.400L6.900 9.800c-.4.400-1 .4-1.400 0l-5-5z" fill="#777"/><circle cx="2.600" cy="2.500" r="0.900" fill="#fff"/></svg>
<div class="ib" style="left:5.0px;top:272.60px"></div>
<svg class="abs" style="left:14.800000000000011px;top:276.99999999999994px" width="9.408" height="12.096" viewBox="0 0 9.8 12.6" ><path d="M4.900 0C2.200 0 0 2.100 0 4.800c0 1.500.700 2.600 1.500 3.500.600.700.900 1.200 1 1.900h4.800c.100-.700.400-1.200 1-1.900.800-.900 1.500-2 1.500-3.500C9.800 2.100 7.600 0 4.900 0z" fill="#f1c40f"/><path d="M2.600 10.600h4.600v1.100H2.600zM2.900 11.700h4c0 .5-.8.900-2 .900s-2-.4-2-.9z" fill="#f1c40f"/><path d="M2.300 4.600c0-1.300 1-2.300 2.300-2.400" fill="none" stroke="#f8de74" stroke-width="0.800"/></svg>
<span id="t62" class="tx" style="left:42.42px;top:272.82px;font-size:9.7px;line-height:12.6px;color:#3b7ec2;letter-spacing:0.050px;">2.5 Milligram</span>
<span id="t63" class="tx" style="left:42.52px;top:287.30px;font-size:8.0px;line-height:10.4px;color:#6a6a6a;letter-spacing:0.088px;">Term Id: 19</span>
<div class="ib" style="left:450.0px;top:272.60px;width:30px;height:21.2px"></div>
<svg class="abs" style="left:459.1px;top:276.9px" width="12.4" height="12.2" viewBox="0 0 12.4 12.2" ><circle cx="5.050" cy="5" r="3.950" fill="none" stroke="#333" stroke-width="2"/><path d="M8.100 8l3.200 3" stroke="#333" stroke-width="2.200" stroke-linecap="round"/></svg>
<svg class="abs" style="left:534.0px;top:272.60px" width="15.8" height="15.8" viewBox="0 0 16 16"><defs><clipPath id="c8"><circle cx="8" cy="8" r="8"/></clipPath></defs><circle cx="8" cy="8" r="8" fill="#f8f0e7"/><g clip-path="url(#c8)"><path d="M8.200 1.900c2.200 0 3.700 1.500 3.700 3.700 0 1.800-.7 3.400-1.700 4.300v1.400c1.600.6 3.700 1.100 4.600 2.200V16H1.600v-2.500c.9-1.100 3-1.600 4.600-2.200V9.900c-1-.9-1.700-2.500-1.700-4.300 0-2.200 1.500-3.700 3.700-3.700z" fill="#f3d0a4"/></g></svg>
<span id="t64" class="tx" style="left:551.65px;top:273.91px;font-size:9.2px;line-height:12.0px;color:#858585;letter-spacing:-0.110px;">Jul 28, 2021</span>
<svg class="abs" style="left:636.6px;top:272.29999999999995px" width="16.2" height="16.2" viewBox="0 0 16.2 16.2" ><rect x="-0.200" y="-0.200" width="16.600" height="16.600" rx="4.500" fill="#fff"/><g transform="translate(-0.300 1.200)"><path d="M11.500 2.450H4.100a2.300 2.300 0 0 0 0 4.600h7.600a2.350 2.350 0 0 1 0 4.700H4.200" fill="none" stroke="#3fa9e1" stroke-width="2.900"/><path d="M11.400 0.300l4.600 2.150-4.600 2.200z" fill="#3fa9e1"/><path d="M4.500 9.500L0 11.750l4.500 2.100z" fill="#3fa9e1"/></g></svg>
<span id="t65" class="tx" style="left:655.85px;top:273.91px;font-size:9.2px;line-height:12.0px;color:#858585;letter-spacing:-0.110px;">Jul 28, 2021</span>
<svg class="abs" style="left:945px;top:277.2px" width="10.4" height="10.4" viewBox="0 0 10.4 10.4" ><path d="M0.600 0.500h4.200l5 5c.4.400.4 1 0 1.400L6.900 9.800c-.4.400-1 .4-1.400 0l-5-5z" fill="#777"/><circle cx="2.600" cy="2.500" r="0.900" fill="#fff"/></svg>
<div class="ib" style="left:5.0px;top:306.10px"></div>
<svg class="abs" style="left:14.800000000000011px;top:310.49999999999994px" width="9.408" height="12.096" viewBox="0 0 9.8 12.6" ><path d="M4.900 0C2.200 0 0 2.100 0 4.800c0 1.500.700 2.600 1.500 3.500.600.700.900 1.200 1 1.900h4.800c.100-.700.400-1.200 1-1.900.800-.900 1.500-2 1.500-3.500C9.800 2.100 7.600 0 4.900 0z" fill="#f1c40f"/><path d="M2.600 10.600h4.600v1.100H2.600zM2.900 11.700h4c0 .5-.8.900-2 .900s-2-.4-2-.9z" fill="#f1c40f"/><path d="M2.300 4.600c0-1.300 1-2.300 2.300-2.400" fill="none" stroke="#f8de74" stroke-width="0.800"/></svg>
<span id="t66" class="tx" style="left:42.42px;top:306.32px;font-size:9.7px;line-height:12.6px;color:#3b7ec2;letter-spacing:0.070px;">20 Milligram</span>
<span id="t67" class="tx" style="left:42.52px;top:321.80px;font-size:8.0px;line-height:10.4px;color:#6a6a6a;letter-spacing:0.088px;">Term Id: 20</span>
<div class="ib" style="left:450.0px;top:306.10px;width:30px;height:21.2px"></div>
<svg class="abs" style="left:459.1px;top:310.4px" width="12.4" height="12.2" viewBox="0 0 12.4 12.2" ><circle cx="5.050" cy="5" r="3.950" fill="none" stroke="#333" stroke-width="2"/><path d="M8.100 8l3.200 3" stroke="#333" stroke-width="2.200" stroke-linecap="round"/></svg>
<svg class="abs" style="left:534.0px;top:306.10px" width="15.8" height="15.8" viewBox="0 0 16 16"><defs><clipPath id="c9"><circle cx="8" cy="8" r="8"/></clipPath></defs><circle cx="8" cy="8" r="8" fill="#f8f0e7"/><g clip-path="url(#c9)"><path d="M8.200 1.900c2.200 0 3.700 1.500 3.700 3.700 0 1.800-.7 3.400-1.700 4.300v1.400c1.600.6 3.700 1.100 4.600 2.200V16H1.600v-2.500c.9-1.100 3-1.600 4.600-2.200V9.900c-1-.9-1.700-2.500-1.700-4.300 0-2.200 1.500-3.700 3.700-3.700z" fill="#f3d0a4"/></g></svg>
<span id="t68" class="tx" style="left:551.65px;top:307.41px;font-size:9.2px;line-height:12.0px;color:#858585;letter-spacing:-0.110px;">Jul 28, 2021</span>
<svg class="abs" style="left:636.6px;top:305.79999999999995px" width="16.2" height="16.2" viewBox="0 0 16.2 16.2" ><rect x="-0.200" y="-0.200" width="16.600" height="16.600" rx="4.500" fill="#fff"/><g transform="translate(-0.300 1.200)"><path d="M11.500 2.450H4.100a2.300 2.300 0 0 0 0 4.600h7.600a2.350 2.350 0 0 1 0 4.700H4.200" fill="none" stroke="#3fa9e1" stroke-width="2.900"/><path d="M11.400 0.300l4.600 2.150-4.600 2.200z" fill="#3fa9e1"/><path d="M4.500 9.500L0 11.750l4.500 2.100z" fill="#3fa9e1"/></g></svg>
<span id="t69" class="tx" style="left:655.85px;top:307.41px;font-size:9.2px;line-height:12.0px;color:#858585;letter-spacing:-0.110px;">Jul 28, 2021</span>
<svg class="abs" style="left:945px;top:310.7px" width="10.4" height="10.4" viewBox="0 0 10.4 10.4" ><path d="M0.600 0.500h4.200l5 5c.4.400.4 1 0 1.400L6.900 9.800c-.4.400-1 .4-1.400 0l-5-5z" fill="#777"/><circle cx="2.600" cy="2.500" r="0.900" fill="#fff"/></svg>
</div>
<div class="abs" style="left:1415px;top:195.3px;width:13.3px;height:329.6px;background:#f3f3f3"></div>
<div class="abs" style="left:1416.8px;top:208.1px;width:9.4px;height:88px;background:#c1c1c1"></div>
<svg class="abs" style="left:1418.7px;top:200.6px" width="5.4" height="3.2" viewBox="0 0 5.4 3.2" ><path d="M0 3.200L2.700 0l2.700 3.200z" fill="#a8a8a8"/></svg>
<svg class="abs" style="left:1418.7px;top:516.8px" width="5.4" height="3.2" viewBox="0 0 5.4 3.2" ><path d="M0 0h5.400L2.700 3.200z" fill="#404040"/></svg>
<div class="abs" style="left:232.7px;top:532.1px;width:27.7px;height:18.6px;border:1px solid #e2e2e2;border-radius:3px;background:#f5f5f5"></div>
<div class="abs" style="left:263.7px;top:532.1px;width:25.9px;height:18.6px;border:1px solid #e2e2e2;border-radius:3px;background:#f5f5f5"></div>
<div class="abs" style="left:355.7px;top:532.1px;width:25.6px;height:18.6px;border:1px solid #cfcfcf;border-radius:3px;background:#f5f5f5"></div>
<div class="abs" style="left:384.7px;top:532.1px;width:25.4px;height:18.6px;border:1px solid #cfcfcf;border-radius:3px;background:#f5f5f5"></div>
<svg class="abs" style="left:241.6px;top:537.2px" width="10" height="8.4" viewBox="0 0 10 8.4" ><rect x="0.300" y="0" width="1.300" height="8.400" fill="#8a8a8a"/><path d="M9.500 0.300v7.800L3 4.200z" fill="#8a8a8a"/></svg>
<svg class="abs" style="left:273.6px;top:537.4px" width="6.6" height="8" viewBox="0 0 6.6 8" ><path d="M6.600 0v8L0 4z" fill="#8a8a8a"/></svg>
<svg class="abs" style="left:365.3px;top:537.4px" width="6.6" height="8" viewBox="0 0 6.6 8" ><path d="M0 0v8l6.600-4z" fill="#3a3a3a"/></svg>
<svg class="abs" style="left:393.3px;top:537.2px" width="10" height="8.4" viewBox="0 0 10 8.400" ><rect x="8.300" y="0" width="1.400" height="8.400" fill="#3a3a3a"/><path d="M0.500 0.300v7.800L7 4.200z" fill="#3a3a3a"/></svg>
<div class="abs" style="left:292.3px;top:531.3px;width:38.3px;height:19.4px;border:1px solid #cfcfcf;border-radius:3px;background:#fff"></div>
<span id="t70" class="tx" style="left:301.42px;top:535.12px;font-size:9.7px;line-height:12.6px;color:#666;">1</span>
<span id="t71" class="tx" style="left:335.22px;top:535.62px;font-size:9.7px;line-height:12.6px;color:#606060;letter-spacing:0.726px;">/ 11</span>
<div class="abs" style="left:428.7px;top:531.3px;width:50.8px;height:18.7px;border:1px solid #cfcfcf;border-radius:3px;background:#fff;overflow:hidden"></div>
<div class="abs" style="left:430px;top:539.3px;width:30px;height:6.2px;overflow:hidden"><span id="t72" class="tx" style="left:9.32px;top:-2.28px;font-size:9.7px;line-height:12.6px;color:#666;letter-spacing:-0.320px;">50</span></div>
<svg class="abs" style="left:468.5px;top:538.1px" width="7" height="5" viewBox="0 0 7 5" ><path d="M0.800 0.900L3.5 3.9L6.2 0.900" fill="none" stroke="#333" stroke-width="1.5"/></svg>
<span id="t73" class="tx" style="left:481.56px;top:534.33px;font-size:10.6px;line-height:13.8px;color:#606060;letter-spacing:0.359px;">items per page</span>
<span id="t74" class="tx" style="left:1329.26px;top:536.83px;font-size:10.6px;line-height:13.8px;color:#484848;letter-spacing:0.220px;">1 - 50 of 518 items</span>
<div id="dd"></div>
<span id="t75" class="tx" style="left:1322.88px;top:40.47px;font-size:10.4px;line-height:13.5px;color:#7b7b7b;letter-spacing:0.167px;">Export English</span>
<span id="t76" class="tx" style="left:1322.78px;top:66.37px;font-size:10.4px;line-height:13.5px;color:#7b7b7b;letter-spacing:0.156px;">Export All Languages</span>
<span id="t77" class="tx" style="left:1321.98px;top:87.57px;font-size:10.4px;line-height:13.5px;color:#646464;letter-spacing:0.163px;">Export With SPOR</span>
<span id="t78" class="tx" style="left:219.88px;top:618.10px;font-size:8.6px;line-height:11.2px;color:#6c6c6c;letter-spacing:-0.126px;">SPORIFY 21.3 Enterprise</span>
<svg class="abs" style="left:1159.4px;top:614.6px" width="11" height="11" viewBox="0 0 13 13" ><circle cx="6.500" cy="6.500" r="6.500" fill="#3b7dbf"/><circle cx="6.500" cy="3.500" r="1.100" fill="#fff"/><path d="M5.200 5.400h2.200v3.900h.8v1.100H5v-1.100h.9V6.500h-.7z" fill="#fff"/></svg>
<span id="t79" class="tx" style="left:1172.78px;top:617.15px;font-size:8.7px;line-height:11.3px;color:#707070;letter-spacing:-0.010px;">Current Timezone: (UTC+00:00) Dublin, Edinburgh, Lisbon, London</span>
</body>
</html>
